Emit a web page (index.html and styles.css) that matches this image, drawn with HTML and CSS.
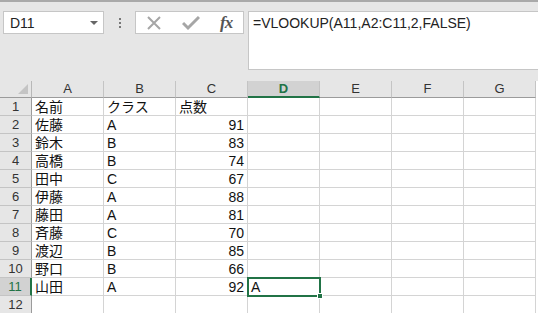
FILE: index.html
```html
<!DOCTYPE html>
<html lang="ja">
<head>
<meta charset="utf-8">
<link rel="stylesheet" href="styles.css">
</head>
<body>
<div class="app">
  <div class="toolbar">
    <div class="namebox"><span class="nb-text">D11</span><span class="nb-arrow"></span></div>
    <div class="dots"><i></i><i></i><i></i></div>
    <div class="fxbox">
      <svg class="ic-x" width="16" height="16" viewBox="0 0 16 16"><path d="M2 2 L14 14 M14 2 L2 14" stroke="#a6a6a6" stroke-width="2" fill="none"/></svg>
      <svg class="ic-check" width="18" height="16" viewBox="0 0 18 16"><path d="M1 8 L6 13 L17 2" stroke="#a6a6a6" stroke-width="3" fill="none"/></svg>
      <span class="fx">fx</span>
    </div>
    <div class="formula">=VLOOKUP(A11,A2:C11,2,FALSE)</div>
  </div>
  <div class="sheet">
    <div class="corner"><span class="tri"></span></div>
    <div class="ch">A</div><div class="ch">B</div><div class="ch">C</div><div class="ch sel">D</div><div class="ch">E</div><div class="ch">F</div><div class="ch">G</div>

    <div class="rh">1</div><div class="c">名前</div><div class="c">クラス</div><div class="c">点数</div><div class="c"></div><div class="c"></div><div class="c"></div><div class="c"></div>
    <div class="rh">2</div><div class="c">佐藤</div><div class="c">A</div><div class="c n">91</div><div class="c"></div><div class="c"></div><div class="c"></div><div class="c"></div>
    <div class="rh">3</div><div class="c">鈴木</div><div class="c">B</div><div class="c n">83</div><div class="c"></div><div class="c"></div><div class="c"></div><div class="c"></div>
    <div class="rh">4</div><div class="c">高橋</div><div class="c">B</div><div class="c n">74</div><div class="c"></div><div class="c"></div><div class="c"></div><div class="c"></div>
    <div class="rh">5</div><div class="c">田中</div><div class="c">C</div><div class="c n">67</div><div class="c"></div><div class="c"></div><div class="c"></div><div class="c"></div>
    <div class="rh">6</div><div class="c">伊藤</div><div class="c">A</div><div class="c n">88</div><div class="c"></div><div class="c"></div><div class="c"></div><div class="c"></div>
    <div class="rh">7</div><div class="c">藤田</div><div class="c">A</div><div class="c n">81</div><div class="c"></div><div class="c"></div><div class="c"></div><div class="c"></div>
    <div class="rh">8</div><div class="c">斉藤</div><div class="c">C</div><div class="c n">70</div><div class="c"></div><div class="c"></div><div class="c"></div><div class="c"></div>
    <div class="rh">9</div><div class="c">渡辺</div><div class="c">B</div><div class="c n">85</div><div class="c"></div><div class="c"></div><div class="c"></div><div class="c"></div>
    <div class="rh">10</div><div class="c">野口</div><div class="c">B</div><div class="c n">66</div><div class="c"></div><div class="c"></div><div class="c"></div><div class="c"></div>
    <div class="rh sel">11</div><div class="c">山田</div><div class="c">A</div><div class="c n">92</div><div class="c active">A<span class="handle"></span></div><div class="c"></div><div class="c"></div><div class="c"></div>
    <div class="rh">12</div><div class="c"></div><div class="c"></div><div class="c"></div><div class="c"></div><div class="c"></div><div class="c"></div><div class="c"></div>
  </div>
</div>
</body>
</html>
```
FILE: styles.css
```css
* { box-sizing: border-box; }
html, body { margin: 0; padding: 0; }
body {
  width: 538px;
  height: 313px;
  overflow: hidden;
  background: #ffffff;
  font-family: "Liberation Sans", "Noto Sans CJK JP", sans-serif;
}
.app { width: 538px; }

.toolbar {
  position: relative;
  height: 81px;
  background: #e6e6e6;
  border-top: 2px solid #a9a9a9;
  display: flex;
  align-items: flex-start;
  padding-top: 9px;
}
.namebox {
  margin-left: 3px;
  width: 101px;
  height: 23px;
  background: #fff;
  border: 1px solid #c6c6c6;
  display: flex;
  align-items: center;
  justify-content: space-between;
  padding: 0 5px 0 6px;
}
.nb-text { font-size: 14px; color: #222; }
.nb-arrow {
  width: 0; height: 0;
  border-left: 4px solid transparent;
  border-right: 4px solid transparent;
  border-top: 4px solid #666;
  margin-top: 1px;
}
.dots {
  width: 31px;
  height: 23px;
  display: flex;
  flex-direction: column;
  align-items: center;
  justify-content: center;
  gap: 2px;
}
.dots i { display: block; width: 2px; height: 2px; background: #777; }
.fxbox {
  width: 109px;
  height: 23px;
  background: #fff;
  border: 1px solid #c6c6c6;
  display: flex;
  align-items: center;
  padding-left: 10px;
}
.ic-x { margin-right: 20px; }
.ic-check { margin-right: 20px; margin-top: 1px; }
.fx {
  font-family: "Liberation Serif", serif;
  font-style: italic;
  font-weight: bold;
  font-size: 17px;
  color: #555;
  letter-spacing: -1px;
}
.formula {
  margin-left: 4px;
  flex: 1;
  height: 59px;
  margin-right: -2px;
  background: #fff;
  border: 1px solid #c6c6c6;
  font-size: 14px;
  color: #222;
  padding: 2px 0 0 4px;
  line-height: 18px;
}

.sheet {
  display: grid;
  grid-template-columns: 32px repeat(7, 72px);
  grid-template-rows: 17px repeat(12, 18px);
  font-size: 14px;
  color: #111;
}
.corner {
  position: relative;
  background: #e6e6e6;
  border-right: 1px solid #b8b8b8;
  border-bottom: 1px solid #9b9b9b;
}
.tri {
  position: absolute;
  right: 3px;
  bottom: 3px;
  width: 0; height: 0;
  border-left: 10px solid transparent;
  border-bottom: 10px solid #c4c4c4;
}
.ch {
  background: #e6e6e6;
  border-right: 1px solid #c4c4c4;
  border-bottom: 1px solid #9b9b9b;
  text-align: center;
  font-size: 13px;
  line-height: 16px;
  color: #333;
}
.ch.sel {
  background: #d2d2d2;
  color: #217346;
  font-weight: bold;
  border-bottom: 2px solid #217346;
}
.rh {
  background: #e6e6e6;
  border-right: 1px solid #9b9b9b;
  border-bottom: 1px solid #c4c4c4;
  text-align: center;
  font-size: 13px;
  line-height: 18px;
  color: #333;
}
.rh.sel {
  background: #d2d2d2;
  color: #217346;
  border-right: 2px solid #217346;
}
.c {
  border-right: 1px solid #d4d4d4;
  border-bottom: 1px solid #d4d4d4;
  line-height: 18px;
  padding: 0 3px;
  white-space: nowrap;
  overflow: visible;
}
.c.n { text-align: right; }
.c.active {
  position: relative;
  outline: 2px solid #217346;
  outline-offset: -1px;
  z-index: 1;
}
.handle {
  position: absolute;
  right: -4px;
  bottom: -4px;
  width: 6px;
  height: 6px;
  background: #217346;
  border: 1px solid #fff;
}
```
